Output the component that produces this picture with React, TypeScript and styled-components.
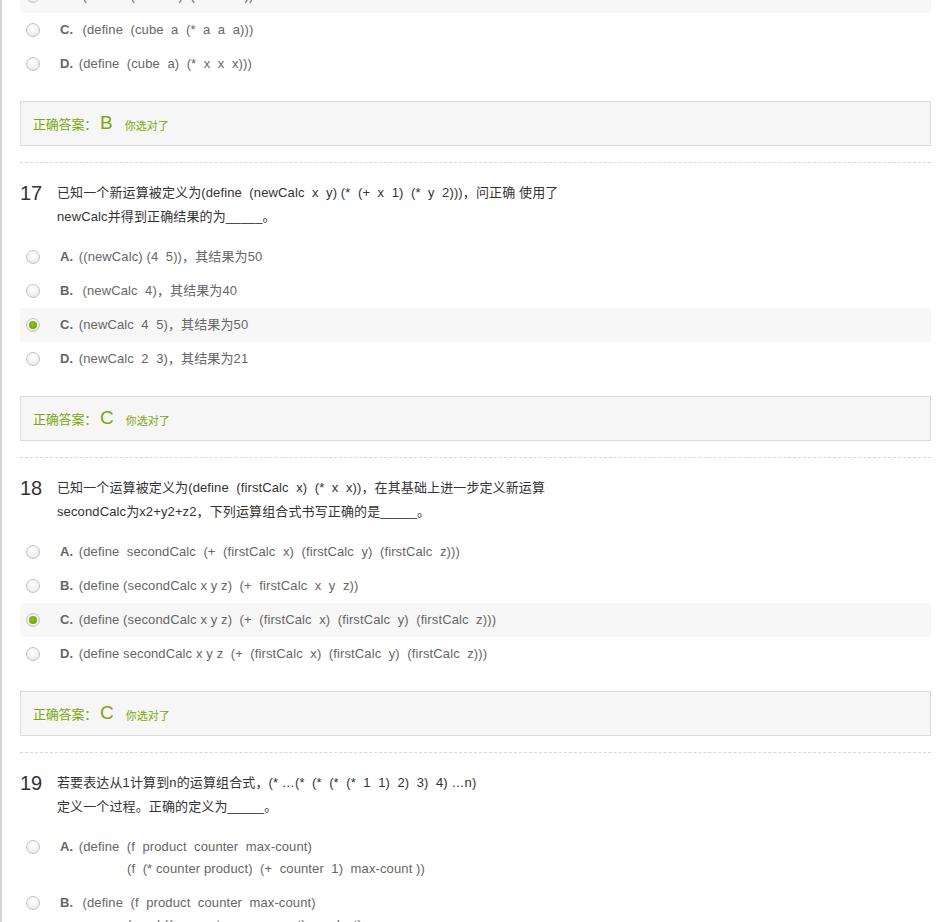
import React from "react";
import styled, { createGlobalStyle } from "styled-components";

const Global = createGlobalStyle`
  html, body { margin: 0; padding: 0; background: #fff; }
  body { font-family: "Liberation Sans", Arial, "Noto Sans CJK SC", sans-serif; overflow: hidden; }
`;

const Page = styled.div`
  border-left: 2px solid #d2d2d2;
  padding-left: 18px;
  width: 911px;
  min-height: 922px;
  overflow: hidden;
`;

const Lead = styled.div`
  margin-top: -21px;
`;

const Question = styled.section`
  padding-top: 18px;
`;

const Title = styled.div`
  display: flex;
  align-items: flex-start;
  color: #333;
`;

const Num = styled.div`
  width: 37px;
  flex: none;
  font-size: 20px;
  line-height: 24px;
  color: #333;
`;

const TitleText = styled.div`
  font-size: 13px;
  line-height: 24px;
  letter-spacing: 0.12px;
  white-space: pre-wrap;
`;

const Options = styled.div`
  margin-top: 11px;
`;

const Row = styled.div<{ $on?: boolean }>`
  display: flex;
  align-items: flex-start;
  padding: 6px 0 6px 6px;
  background: ${(p) => (p.$on ? "#f7f7f7" : "transparent")};
  color: #666;
  font-size: 13px;
  line-height: 22px;
`;

const Radio = styled.span<{ $on?: boolean }>`
  flex: none;
  box-sizing: border-box;
  width: 14px;
  height: 14px;
  margin-top: 4px;
  margin-right: 20px;
  border-radius: 50%;
  border: 1px solid #c4c4c4;
  background: radial-gradient(circle at 50% 35%, #ffffff 0%, #f2f2f2 55%, #dcdcdc 100%);
  display: flex;
  align-items: center;
  justify-content: center;
  &::after {
    content: "";
    display: ${(p) => (p.$on ? "block" : "none")};
    width: 8px;
    height: 8px;
    border-radius: 50%;
    background: radial-gradient(circle at 45% 40%, #8fc414 0%, #72a806 70%, #5d8f00 100%);
  }
`;

const Label = styled.span`
  font-weight: bold;
  margin-right: 2px;
  letter-spacing: 0;
`;

const OptText = styled.div`
  white-space: pre;
  letter-spacing: 0.12px;
`;

const Cont = styled.div`
  padding-left: 67px;
`;

const AnswerBox = styled.div`
  margin-top: 20px;
  box-sizing: border-box;
  height: 45px;
  border: 1px solid #dadada;
  background: #f6f6f6;
  padding-left: 12px;
  display: flex;
  align-items: center;
  color: #7aa70c;
`;

const AnsLabel = styled.span`
  font-size: 13px;
  letter-spacing: -0.2px;
`;

const AnsLetter = styled.span`
  font-size: 19px;
  margin: 0 12px 0 3px;
  position: relative;
  top: -1px;
`;

const AnsNote = styled.span`
  font-size: 11px;
  position: relative;
  top: 1px;
`;

const Sep = styled.hr`
  margin: 16px 0 0;
  border: 0;
  border-top: 1px dashed #d8d8d8;
  height: 0;
`;

type Opt = { k: string; t: string; more?: string };

const OptionList = ({ opts, sel }: { opts: Opt[]; sel: string }) => (
  <>
    {opts.map((o) => (
      <Row key={o.k} $on={o.k === sel}>
        <Radio $on={o.k === sel} />
        <OptText>
          <Label>{o.k}.</Label>
          {o.t}
          {o.more && <Cont>{o.more}</Cont>}
        </OptText>
      </Row>
    ))}
  </>
);

const Answer = ({ a }: { a: string }) => (
  <>
    <AnswerBox>
      <AnsLabel>正确答案：</AnsLabel>
      <AnsLetter>{a}</AnsLetter>
      <AnsNote>你选对了</AnsNote>
    </AnswerBox>
    <Sep />
  </>
);

const Q = ({
  n,
  lines,
  opts,
  sel,
}: {
  n: string;
  lines: string[];
  opts: Opt[];
  sel: string;
}) => (
  <Question>
    <Title>
      <Num>{n}</Num>
      <TitleText>
        {lines.map((l, i) => (
          <div key={i}>{l}</div>
        ))}
      </TitleText>
    </Title>
    <Options>
      <OptionList opts={opts} sel={sel} />
    </Options>
    <Answer a={sel} />
  </Question>
);

export default function App() {
  return (
    <>
      <Global />
      <Page>
        <Lead>
          <OptionList
            sel="B"
            opts={[
              { k: "B", t: "  (define  (cube  a)  (*  a  a  a))" },
              { k: "C", t: "  (define  (cube  a  (*  a  a  a)))" },
              { k: "D", t: " (define  (cube  a)  (*  x  x  x)))" },
            ]}
          />
          <Answer a="B" />
        </Lead>
        <Q
          n="17"
          sel="C"
          lines={[
            "已知一个新运算被定义为(define  (newCalc  x  y) (*  (+  x  1)  (*  y  2)))，问正确 使用了",
            "newCalc并得到正确结果的为_____。",
          ]}
          opts={[
            { k: "A", t: " ((newCalc) (4  5))，其结果为50" },
            { k: "B", t: "  (newCalc  4)，其结果为40" },
            { k: "C", t: " (newCalc  4  5)，其结果为50" },
            { k: "D", t: " (newCalc  2  3)，其结果为21" },
          ]}
        />
        <Q
          n="18"
          sel="C"
          lines={[
            "已知一个运算被定义为(define  (firstCalc  x)  (*  x  x))，在其基础上进一步定义新运算",
            "secondCalc为x2+y2+z2，下列运算组合式书写正确的是_____。",
          ]}
          opts={[
            { k: "A", t: " (define  secondCalc  (+  (firstCalc  x)  (firstCalc  y)  (firstCalc  z)))" },
            { k: "B", t: " (define (secondCalc x y z)  (+  firstCalc  x  y  z))" },
            { k: "C", t: " (define (secondCalc x y z)  (+  (firstCalc  x)  (firstCalc  y)  (firstCalc  z)))" },
            { k: "D", t: " (define secondCalc x y z  (+  (firstCalc  x)  (firstCalc  y)  (firstCalc  z)))" },
          ]}
        />
        <Question>
          <Title>
            <Num>19</Num>
            <TitleText>
              <div>若要表达从1计算到n的运算组合式，(* …(*  (*  (*  (*  1  1)  2)  3)  4) …n)</div>
              <div>定义一个过程。正确的定义为_____。</div>
            </TitleText>
          </Title>
          <Options>
            <OptionList
              sel=""
              opts={[
                {
                  k: "A",
                  t: " (define  (f  product  counter  max-count)",
                  more: "(f  (* counter product)  (+  counter  1)  max-count ))",
                },
                {
                  k: "B",
                  t: "  (define  (f  product  counter  max-count)",
                  more: "(cond ((>  counter  max-count)  product)",
                },
              ]}
            />
          </Options>
        </Question>
      </Page>
    </>
  );
}
